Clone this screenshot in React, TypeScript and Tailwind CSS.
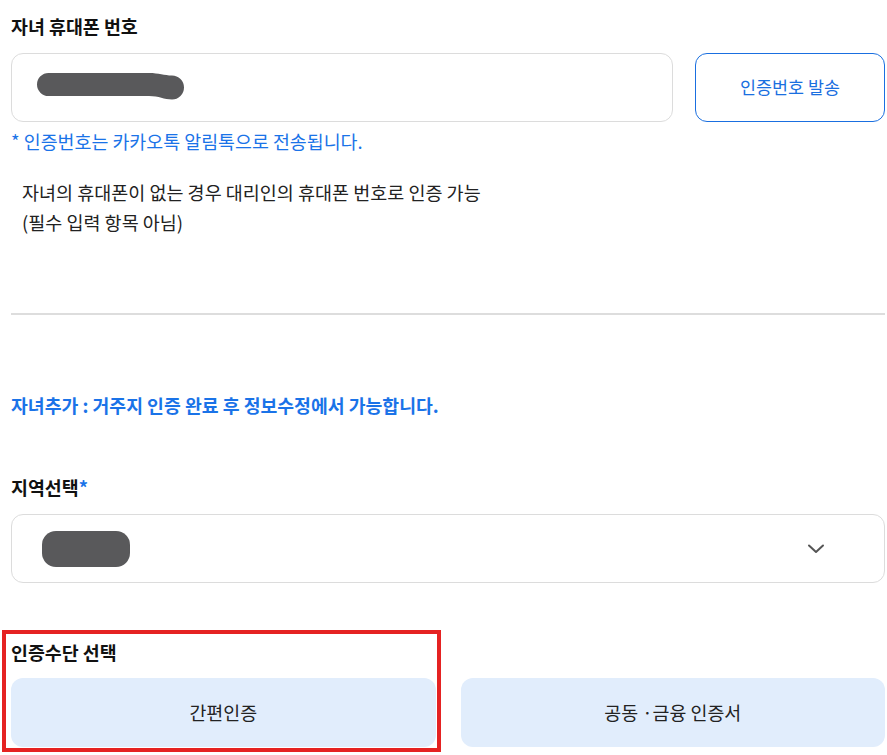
import React from "react";

export default function App() {
  return (
    <div
      className="relative w-[887px] h-[755px] overflow-hidden bg-white pl-[11px] pr-[2px] text-[#111]"
      style={{ fontFamily: '"Noto Sans CJK KR", "Noto Sans", sans-serif' }}
    >
      <div className="pt-[13px] text-[18.4px] font-bold leading-[26px]">자녀 휴대폰 번호</div>

      <div className="mt-[14px] flex h-[69px] gap-[22px]">
        <div className="flex flex-1 items-center rounded-[12px] border border-[#dcdcdc] pb-[3px] pl-[25px]">
          <svg width="147" height="27" viewBox="0 0 147 27">
            <path
              d="M11.5 0 L112 0 C122 0 127 2.5 135 2.5 A12 12 0 0 1 135 26.5 C127 26.5 122 23 112 23 L11.5 23 A11.5 11.5 0 0 1 11.5 0 Z"
              fill="#59595b"
            />
          </svg>
        </div>
        <button className="w-[190px] rounded-[12px] border border-[#1a6fe0] text-[17.4px] text-[#1a6fe0]">
          인증번호 발송
        </button>
      </div>

      <div className="mt-[7px] text-[18.4px] leading-[24px] text-[#1a73e8]">
        * 인증번호는 카카오톡 알림톡으로 전송됩니다.
      </div>

      <div className="ml-[11px] mt-[24px] text-[18.5px] leading-[30px] text-[#222]">
        <div>자녀의 휴대폰이 없는 경우 대리인의 휴대폰 번호로 인증 가능</div>
        <div>(필수 입력 항목 아님)</div>
      </div>

      <div className="mt-[76px] h-[2px] bg-[#dddddd]" />

      <div className="mt-[77px] text-[18.3px] font-bold leading-[26px] text-[#1a73e8]">
        자녀추가 : 거주지 인증 완료 후 정보수정에서 가능합니다.
      </div>

      <div className="mt-[56px] text-[18.4px] font-bold leading-[26px]">
        지역선택<span className="text-[#1a73e8]">*</span>
      </div>

      <div className="mt-[14px] flex h-[69px] items-center justify-between rounded-[12px] border border-[#dcdcdc] pl-[30px] pr-[58px]">
        <div className="h-[36px] w-[88px] rounded-[14px] bg-[#59595b]" />
        <svg width="20" height="12" viewBox="0 0 20 12" fill="none">
          <path d="M3 2.5 L10 9 L17 2.5" stroke="#555" strokeWidth="2" strokeLinecap="round" strokeLinejoin="round" />
        </svg>
      </div>

      <div className="mt-[56px] text-[18.4px] font-bold leading-[26px]">인증수단 선택</div>

      <div className="mt-[13px] flex h-[69px] gap-[25px]">
        <button className="flex-1 rounded-[12px] bg-[#e1edfc] text-[18.4px] text-[#222]">간편인증</button>
        <button className="flex-1 rounded-[12px] bg-[#e1edfc] text-[18.4px] text-[#222]">공동 ·금융 인증서</button>
      </div>

      <div className="absolute left-[2px] top-[630px] h-[122px] w-[439px] border-[4px] border-[#e52222]" />
    </div>
  );
}
